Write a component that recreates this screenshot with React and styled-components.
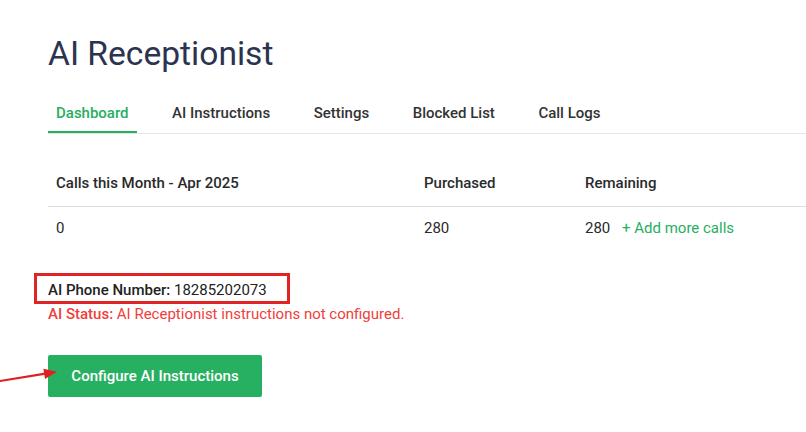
import React from "react";
import styled, { createGlobalStyle } from "styled-components";

const GlobalStyle = createGlobalStyle`
  body {
    margin: 0;
    background: #fff;
    font-family: Roboto, "Liberation Sans", Arial, sans-serif;
    color: #333;
  }
`;

const tabs = ["Dashboard", "AI Instructions", "Settings", "Blocked List", "Call Logs"];

const App = () => {
  return (
    <Page>
      <GlobalStyle />
      <Title>AI Receptionist</Title>

      <TabBar>
        {tabs.map((t, i) => (
          <Tab key={t} $active={i === 0}>
            {t}
          </Tab>
        ))}
      </TabBar>

      <Table>
        <thead>
          <tr>
            <Th $w={368}>Calls this Month - Apr 2025</Th>
            <Th $w={161}>Purchased</Th>
            <Th>Remaining</Th>
          </tr>
        </thead>
        <tbody>
          <tr>
            <Td>0</Td>
            <Td>280</Td>
            <Td>
              280 <AddLink href="#">+ Add more calls</AddLink>
            </Td>
          </tr>
        </tbody>
      </Table>

      <Info>
        <PhoneLine>
          <b>AI Phone Number:</b> 18285202073
          <Highlight />
        </PhoneLine>
        <Status>
          <b>AI Status:</b> AI Receptionist instructions not configured.
        </Status>
      </Info>

      <ButtonWrap>
        <Arrow width="60" height="30" viewBox="0 0 60 30">
          <line x1="0" y1="21" x2="47" y2="13.4" stroke="#e02020" strokeWidth="2.2" />
          <polygon points="57,11.8 45,19 43.4,8.8" fill="#e02020" />
        </Arrow>
        <GreenButton>Configure AI Instructions</GreenButton>
      </ButtonWrap>
    </Page>
  );
};

export default App;

const Page = styled.div`
  padding: 34px 0 40px 48px;
`;

const Title = styled.h1`
  margin: 0;
  font-size: 33.6px;
  line-height: 40px;
  font-weight: 400;
  color: #2b3350;
`;

const TabBar = styled.div`
  display: flex;
  gap: 27.5px;
  margin-top: 18px;
  border-bottom: 1px solid #e6e6e6;
`;

const Tab = styled.div`
  padding: 11px 8px 8px;
  font-size: 15px;
  line-height: 20px;
  font-weight: 500;
  color: ${({ $active }) => ($active ? "#27ae60" : "#333")};
  border-bottom: 2px solid ${({ $active }) => ($active ? "#27ae60" : "transparent")};
`;

const Table = styled.table`
  margin-top: 26px;
  width: 100%;
  table-layout: fixed;
  border-collapse: collapse;
  font-size: 15px;
  line-height: 22px;
`;

const Th = styled.th`
  box-sizing: border-box;
  width: ${({ $w }) => ($w ? `${$w}px` : "auto")};
  text-align: left;
  font-weight: 500;
  color: #2a2a2a;
  padding: 12px 8px;
  border-bottom: 1px solid #dddddd;
`;

const Td = styled.td`
  padding: 10px 8px 8px;
  color: #2a2a2a;
`;

const AddLink = styled.a`
  margin-left: 8px;
  color: #27ae60;
  text-decoration: none;
`;

const Info = styled.div`
  margin-top: 31px;
  font-size: 15px;
  line-height: 24px;
`;

const PhoneLine = styled.div`
  position: relative;
  color: #222;
  b {
    font-weight: 500;
  }
`;

const Highlight = styled.span`
  position: absolute;
  left: -14px;
  top: -5px;
  width: 256px;
  height: 31px;
  box-sizing: border-box;
  border: 3px solid #e02424;
`;

const Status = styled.div`
  color: #f0403c;
  b {
    font-weight: 500;
  }
`;

const ButtonWrap = styled.div`
  position: relative;
  margin-top: 29px;
`;

const Arrow = styled.svg`
  position: absolute;
  left: -48px;
  top: 5px;
`;

const GreenButton = styled.button`
  height: 42px;
  width: 214px;
  border: none;
  border-radius: 2px;
  background: #28b062;
  color: #fff;
  font-family: Roboto, "Liberation Sans", Arial, sans-serif;
  font-size: 15px;
  font-weight: 500;
  cursor: pointer;
`;
